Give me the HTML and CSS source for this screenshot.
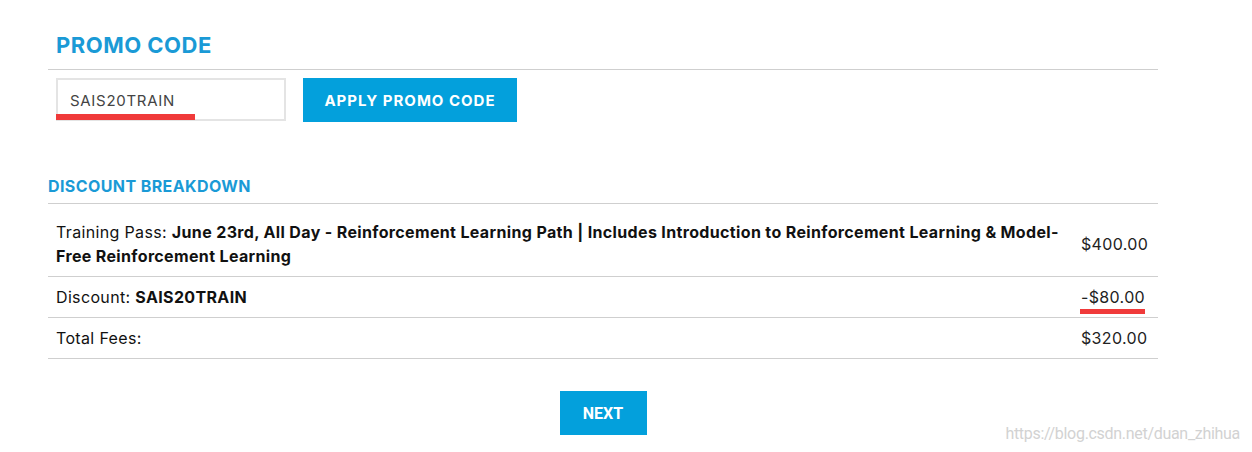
FILE: index.html
```html
<!DOCTYPE html>
<html>
<head>
<meta charset="utf-8">
<link rel="stylesheet" href="styles.css">
</head>
<body>
<div class="page">
  <section class="promo">
    <h2 class="promo-title">PROMO CODE</h2>
    <div class="promo-row">
      <div class="input-wrap">
        <div class="promo-input">SAIS20TRAIN</div>
        <span class="mark mark-input"></span>
      </div>
      <button class="btn btn-apply">APPLY PROMO CODE</button>
    </div>
  </section>
  <section class="breakdown">
    <h3 class="breakdown-title">DISCOUNT BREAKDOWN</h3>
    <table class="fees">
      <tr class="row-tall">
        <td class="desc">Training Pass: <b>June 23rd, All Day - Reinforcement Learning Path | Includes Introduction to Reinforcement Learning &amp; Model-Free Reinforcement Learning</b></td>
        <td class="amt">$400.00</td>
      </tr>
      <tr>
        <td class="desc">Discount: <b>SAIS20TRAIN</b></td>
        <td class="amt"><span class="amt-mark">-$80.00<span class="mark mark-amt"></span></span></td>
      </tr>
      <tr>
        <td class="desc">Total Fees:</td>
        <td class="amt">$320.00</td>
      </tr>
    </table>
  </section>
  <div class="next-row">
    <button class="btn btn-next">NEXT</button>
  </div>
  <div class="watermark">https://blog.csdn.net/duan_zhihua</div>
</div>
</body>
</html>
```
FILE: styles.css
```css
* { box-sizing: border-box; }
body {
  margin: 0;
  background: #fff;
  font-family: "Inter", "Open Sans", sans-serif;
  color: #111;
}
.page {
  width: 1252px;
  height: 452px;
  padding: 0 94px 0 48px;
  position: relative;
}
.promo-title {
  margin: 0;
  padding: 32px 0 0 8px;
  height: 70px;
  border-bottom: 1px solid #cfcfcf;
  font-size: 22px;
  line-height: 26px;
  font-weight: 700;
  color: #1a9ad6;
  letter-spacing: 0.5px;
}
.promo-row {
  display: flex;
  align-items: flex-start;
  gap: 17px;
  padding: 8px 0 0 8px;
}
.input-wrap {
  position: relative;
}
.promo-input {
  width: 230px;
  height: 43px;
  border: 2px solid #e4e4e4;
  padding: 0 0 0 12px;
  font-size: 15px;
  line-height: 41px;
  color: #444;
  letter-spacing: 0.7px;
}
.mark {
  position: absolute;
  background: #f03a3a;
  height: 6px;
}
.mark-input {
  left: 0;
  width: 139px;
  top: 36px;
}
.btn {
  border: 0;
  background: #03a0dc;
  color: #fff;
  font-family: "Inter", sans-serif;
  font-weight: 700;
  font-size: 15px;
  cursor: pointer;
}
.btn-apply {
  width: 214px;
  height: 44px;
  padding: 0;
  letter-spacing: 1px;
}
.breakdown {
  padding-top: 55px;
}
.breakdown-title {
  margin: 0;
  height: 26px;
  font-size: 16px;
  font-weight: 700;
  color: #1a9ad6;
  line-height: 18px;
  letter-spacing: 0.4px;
}
.fees {
  width: 100%;
  border-collapse: collapse;
  border-top: 1px solid #cfcfcf;
  font-size: 16px;
  letter-spacing: 0.35px;
}
.fees td {
  border-bottom: 1px solid #cfcfcf;
  padding: 8px 8px;
  line-height: 24px;
  vertical-align: middle;
}
.fees .row-tall td { padding-top: 16px; padding-bottom: 8px; }
.desc { color: #111; }
.desc b { font-weight: 700; }
.amt {
  width: 77px;
  white-space: nowrap;
  color: #222;
}
.fees td.amt { padding-left: 0; padding-right: 4px; }
.amt-mark { position: relative; display: inline-block; }
.mark-amt {
  left: -1px;
  right: 0px;
  top: 24px;
  height: 5px;
}
.next-row {
  display: flex;
  justify-content: center;
  padding-top: 32px;
}
.btn-next {
  width: 87px;
  height: 44px;
  font-family: "Roboto", sans-serif;
  font-size: 16px;
}
.watermark {
  position: absolute;
  right: 12px;
  top: 424px;
  font-family: "Roboto", sans-serif;
  font-size: 16px;
  color: #d2d2d2;
  letter-spacing: -0.3px;
}
```
